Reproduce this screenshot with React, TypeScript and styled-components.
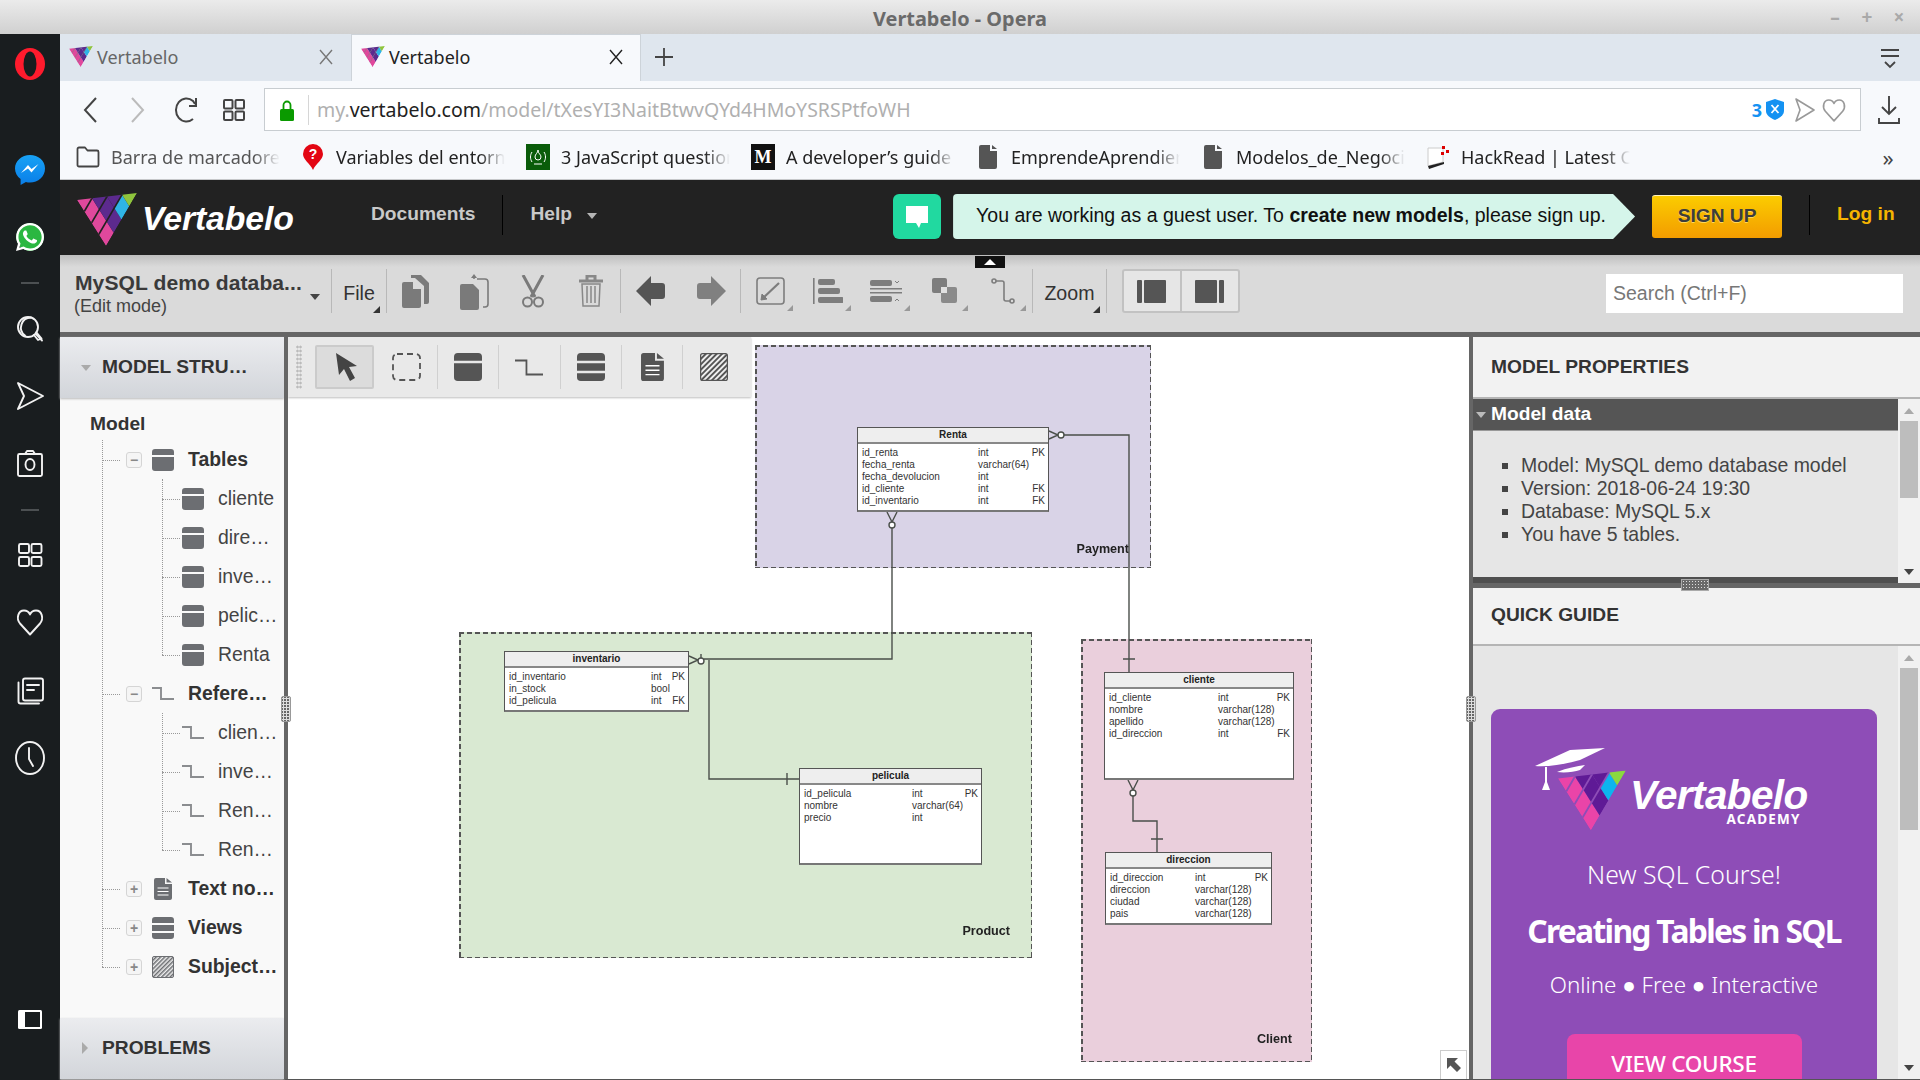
import React, { useId } from 'react';
import styled, { createGlobalStyle } from 'styled-components';
import { FaWhatsapp } from 'react-icons/fa';

const SANS = "'Liberation Sans', Arial, sans-serif";
const UI = "'Noto Sans', 'Open Sans', sans-serif";

const Global = createGlobalStyle`
  html, body { margin: 0; padding: 0; width: 1920px; height: 1080px; overflow: hidden; background: #fff; }
  #root { width: 1920px; height: 1080px; }
  * { box-sizing: border-box; }
`;

const Page = styled.div`
  width: 1920px; height: 1080px; display: flex; flex-direction: column; font-family: ${SANS}; overflow: hidden;
`;
const TitleBar = styled.div`
  height: 34px; flex: none; position: relative; display: flex; align-items: center; justify-content: center;
  background: linear-gradient(#ebebeb, #d0d0d0);
`;
const TitleText = styled.div`
  font: 700 19.9px ${UI}; color: #6a6a6a; padding-top: 2px;
`;
const WinControls = styled.div`
  position: absolute; right: 15px; top: 0; height: 34px; display: flex; align-items: center; gap: 20px;
  font: 700 19px ${UI}; color: #a9a9a9;
  & > span { width: 12px; text-align: center; }
`;
const Win = styled.div`
  flex: 1; min-height: 0; display: flex;
`;
const OperaBar = styled.div`
  width: 60px; flex: none; background: #191d1f; display: flex; flex-direction: column; align-items: center; padding-bottom: 43px;
`;
const Slot = styled.div<{ $gap?: number; $auto?: boolean }>`
  width: 34px; height: 34px; flex: none; display: flex; align-items: center; justify-content: center;
  margin-top: ${p => (p.$auto ? 'auto' : `${p.$gap ?? 0}px`)};
`;
const Dash = styled.div`
  width: 18px; height: 2px; background: #4c5052;
`;
const Browser = styled.div`
  flex: 1; min-width: 0; display: flex; flex-direction: column;
`;
const TabStrip = styled.div`
  height: 47px; flex: none; background: #dfe6ee; display: flex; align-items: stretch;
`;
const Tab = styled.div<{ $active?: boolean }>`
  width: 290px; flex: none; display: flex; align-items: center; padding: 0 16px 2px 9px; gap: 4px;
  font: 400 18px ${UI}; color: ${p => (p.$active ? '#222' : '#666')};
  background: ${p => (p.$active ? '#f7f9fc' : 'transparent')};
  ${p => (p.$active ? 'border: 1px solid #cdd3d9; border-bottom: 0; margin-left: 1px; width: 290px;' : '')}
`;
const TabClose = styled.div`
  margin-left: auto; display: flex;
`;
const NewTab = styled.div`
  width: 46px; display: flex; align-items: center; justify-content: center; margin-left: 0; padding-bottom: 2px;
`;
const TabMenu = styled.div`
  margin-left: auto; width: 60px; display: flex; align-items: center; justify-content: center;
`;
const AddressRow = styled.div`
  height: 50px; flex: none; background: #f7f9fc; display: flex; align-items: flex-start; padding-top: 7px;
`;
const NavCluster = styled.div`
  width: 204px; height: 43px; flex: none; display: flex; align-items: center;
`;
const NavBtn = styled.div`
  width: 48px; flex: none; display: flex; justify-content: center;
  &:first-child { margin-left: 6px; }
`;
const UrlBox = styled.div`
  width: 1597px; height: 43px; flex: none; background: #fff; border: 1px solid #c8cdd1; display: flex; align-items: center; padding-left: 14px;
`;
const UrlSep = styled.div`
  width: 1px; height: 30px; background: #d6d6d6; margin: 0 8px 0 13px;
`;
const UrlText = styled.div`
  font: 400 19.5px ${UI}; color: #b0b0b0; white-space: nowrap;
  & b { font-weight: 400; color: #222; }
`;
const UrlEnd = styled.div`
  margin-left: auto; display: flex; align-items: center; padding-right: 13px; gap: 5px;
  & > em { font: 700 18px ${UI}; color: #1492f2; font-style: normal; margin-right: -1px; }
  & > svg:first-of-type { margin-right: 5px; }
`;
const Download = styled.div`
  flex: 1; height: 43px; display: flex; align-items: center; justify-content: center; padding-right: 3px;
`;
const BookmarkBar = styled.div`
  height: 49px; flex: none; background: #f7f9fc; border-bottom: 1px solid #c6c8ca; display: flex; align-items: center; padding-left: 16px; padding-top: 4px;
`;
const Bookmark = styled.div`
  width: 225px; flex: none; display: flex; align-items: center; gap: 11px; font: 400 18px ${UI}; color: #222;
`;
const BookmarkIcon = styled.div`
  width: 24px; height: 26px; flex: none; display: flex; align-items: center; justify-content: center;
`;
const BookmarkText = styled.div<{ $muted?: boolean }>`
  width: 169px; overflow: hidden; white-space: nowrap; color: ${p => (p.$muted ? '#555' : '#222')};
  -webkit-mask-image: linear-gradient(90deg, #000 85%, transparent 100%);
  mask-image: linear-gradient(90deg, #000 85%, transparent 100%);
`;
const Chevrons = styled.div`
  margin-left: auto; width: 60px; padding-right: 4px; text-align: center; font: 400 22px ${UI}; color: #444;
`;
const AppHeader = styled.div`
  height: 75px; flex: none; background: #222; display: flex; align-items: flex-start; position: relative;
`;
const HeaderLogo = styled.div`
  margin: 13px 0 0 17px; width: 60px; flex: none; display: flex;
`;
const Wordmark = styled.div`
  font: italic 700 33.8px ${SANS}; color: #fff; margin: 19px 0 0 5px; width: 229px; flex: none; letter-spacing: -0.1px;
`;
const HeadLink = styled.div<{ $orange?: boolean }>`
  font: 700 19.2px ${SANS}; color: ${p => (p.$orange ? '#f5b300' : '#c9c9c9')}; margin-top: 23px; white-space: nowrap;
`;
const HeadSep = styled.div<{ $l: number; $r: number }>`
  width: 1px; height: 40px; background: #000; margin: 15px ${p => p.$r}px 0 ${p => p.$l}px; flex: none;
`;
const HeadCaret = styled.div`
  width: 0; height: 0; border: 5px solid transparent; border-top: 6px solid #b5b5b5; border-bottom: 0; margin: 33px 0 0 15px;
`;
const ChatBtn = styled.div`
  width: 48px; height: 45px; background: #21d9a0; border-radius: 6px; margin: 14px 0 0 296px; display: flex; align-items: center; justify-content: center; flex: none;
`;
const Notice = styled.div`
  width: 682px; height: 45px; margin: 14px 0 0 12px; flex: none; background: #d5f5ea; padding-left: 23px;
  clip-path: polygon(0 0, 660px 0, 100% 50%, 660px 100%, 0 100%);
  border-radius: 4px 0 0 4px; display: flex; align-items: center;
  font: 400 19.5px ${SANS}; color: #111; white-space: nowrap; padding-bottom: 2px;
  & b { font-weight: 700; white-space: pre; }
`;
const SignUp = styled.div`
  width: 130px; height: 43px; margin: 15px 0 0 17px; flex: none; border-radius: 3px; padding-bottom: 2px;
  background: linear-gradient(#fbcc00, #f39c00); border-top: 1px solid #fff3c0; display: flex; align-items: center; justify-content: center;
  font: 700 19.2px ${SANS}; color: #3d3d3d; text-shadow: 0 1px 0 #ffd75a;
`;
const Toolbar = styled.div`
  height: 82px; flex: none; background: linear-gradient(#bfbfbf, #dadada 12px); border-bottom: 5px solid #666; display: flex; align-items: flex-start; padding-top: 14px; position: relative;
`;
const CollapseTab = styled.div`
  position: absolute; left: 915px; top: 1px; width: 30px; height: 12px; background: #111; display: flex; align-items: center; justify-content: center;
  &::after { content: ''; border: 6px solid transparent; border-top: 0; border-bottom: 6px solid #fff; }
`;
const DocTitle = styled.div`
  width: 271px; height: 44px; flex: none; padding-left: 15px; position: relative; color: #333;
`;
const DocName = styled.div`
  font: 700 21.1px ${SANS}; line-height: 24px; margin-top: 2px; white-space: nowrap; color: #3a3a3a; letter-spacing: .05px;
`;
const DocMode = styled.div`
  font: 400 18px ${SANS}; line-height: 21px; margin: 1px 0 0 -1px; color: #444;
`;
const DocCaret = styled.div`
  position: absolute; left: 250px; top: 25px; border: 5.5px solid transparent; border-top: 6px solid #444; border-bottom: 0;
`;
const Sep = styled.div`
  width: 1px; height: 44px; background: #b8b8b8; flex: none;
`;
const TextCell = styled.div<{ $w: number }>`
  width: ${p => p.$w}px; height: 44px; flex: none; position: relative; font: 400 19.6px ${SANS}; color: #333; display: flex; align-items: center; justify-content: center;
  padding-top: 5px;
  &::after { content: ''; position: absolute; right: 6px; bottom: 0; border-style: solid; border-width: 0 0 7px 7px; border-color: transparent transparent #333 transparent; }
`;
const ToolCell = styled.div<{ $w: number; $menu?: boolean }>`
  width: ${p => p.$w}px; height: 44px; flex: none; display: flex; align-items: center; justify-content: center; position: relative;
  ${p => (p.$menu ? `&::after { content: ''; position: absolute; right: 6px; bottom: 2px; border-style: solid; border-width: 0 0 6px 6px; border-color: transparent transparent #999 transparent; }` : '')}
`;
const ViewToggle = styled.div`
  margin-left: 15px; width: 118px; height: 44px; flex: none; display: flex; background: #e6e6e6; border: 2px solid #c2c2c2; border-radius: 3px;
`;
const ViewBtn = styled.div`
  flex: 1; display: flex; align-items: center; justify-content: center;
  &:first-child { border-right: 2px solid #c2c2c2; }
`;
const Search = styled.div`
  margin: 5px 17px 0 auto; width: 297px; height: 39px; flex: none; background: #fff; padding-left: 7px; display: flex; align-items: center;
  font: 400 19.5px ${SANS}; color: #777;
`;
const Workspace = styled.div`
  flex: 1; min-height: 0; display: flex; position: relative; border-bottom: 1px solid #555;
`;
const LeftPanel = styled.div`
  width: 224px; flex: none; background: #f9f9f9; display: flex; flex-direction: column;
`;
const PanelHead = styled.div`
  height: 61px; flex: none; display: flex; align-items: center; padding: 0 0 2px 21px; gap: 11px;
  background: linear-gradient(#ebecef, #d2d5da); font: 700 19.2px ${SANS}; color: #333; white-space: nowrap;
  box-shadow: 0 1px 2px #bbb;
`;
const CaretDown = styled.div`
  width: 0; height: 0; border: 5.5px solid transparent; border-top: 6px solid #aaa; border-bottom: 0; margin-top: 2px;
`;
const CaretRight = styled.div`
  width: 0; height: 0; border: 6px solid transparent; border-left: 6px solid #aaa; border-right: 0; margin-left: 1px; margin-right: 3px;
`;
const Tree = styled.div`
  flex: 1; padding-top: 8px; display: flex; flex-direction: column;
`;
const TreeRoot = styled.div`
  height: 34px; padding: 2px 0 0 30px; font: 700 19.2px ${SANS}; color: #333; display: flex; align-items: center;
`;
const TreeGroup = styled.div<{ $left: number; $top: number }>`
  position: relative;
  &::before { content: ''; position: absolute; left: ${p => p.$left}px; top: ${p => p.$top}px; bottom: 19px; border-left: 1px dotted #999; }
`;
const TreeRow = styled.div<{ $level: 1 | 2 }>`
  height: 39px; display: flex; align-items: center; position: relative; white-space: nowrap;
  padding-left: ${p => (p.$level === 1 ? 66 : 122)}px;
  font: ${p => (p.$level === 1 ? 700 : 400)} 19.4px ${SANS}; color: ${p => (p.$level === 1 ? '#333' : '#444')};
  &::before { content: ''; position: absolute; left: ${p => (p.$level === 1 ? 42 : 102)}px; width: 18px; top: 50%; border-top: 1px dotted #999; }
`;
const Toggle = styled.div`
  width: 16px; height: 16px; flex: none; border: 1px solid #d5d5d5; background: #f5f5f5; border-radius: 3px; display: flex; align-items: center; justify-content: center;
  font: 700 14px ${SANS}; line-height: 14px; color: #888; margin-right: 10px;
`;
const TreeIcon = styled.div`
  width: 22px; height: 26px; flex: none; margin-right: 14px; display: flex; align-items: center; justify-content: center;
`;
const VDivider = styled.div`
  width: 4px; flex: none; background: #666; position: relative; z-index: 3;
`;
const SideGrip = styled.div`
  position: absolute; left: -3px; top: 359px; width: 10px; height: 26px; background: #666 radial-gradient(#ddd 1px, transparent 1.2px) 0 0 / 3px 3px; border: 1px solid #999; border-radius: 2px;
`;
const Canvas = styled.div`
  flex: 1; position: relative; background: #fff; overflow: hidden;
`;
const Palette = styled.div`
  position: absolute; left: 0; top: 0; width: 463px; height: 60px; background: #e9e9e9; box-shadow: 0 1px 2px #bdbdbd; display: flex; align-items: flex-start; padding: 8px 0 0 27px; z-index: 4;
  &::before { content: ''; position: absolute; left: 8px; top: 8px; width: 6px; height: 44px; background: radial-gradient(#bbb 1px, transparent 1.2px) 0 0 / 3px 4px; }
`;
const PaletteBtn = styled.div<{ $active?: boolean; $sep?: boolean }>`
  width: 61.4px; height: 44px; flex: none; display: flex; align-items: center; justify-content: center;
  ${p => (p.$active ? 'background: #dcdcdc; border: 2px solid #cbcbcb; border-radius: 2px; width: 59px; margin-right: 2.4px;' : '')}
  ${p => (p.$sep ? 'border-right: 1px solid #d0d0d0;' : '')}
`;
const Diagram = styled.div`
  position: absolute; inset: 0; filter: blur(0.3px);
`;
const Area = styled.div<{ $x: number; $y: number; $w: number; $h: number; $c: string }>`
  position: absolute; left: ${p => p.$x - 288}px; top: ${p => p.$y - 337}px; width: ${p => p.$w}px; height: ${p => p.$h}px;
  background:
    linear-gradient(90deg, #555 5px, transparent 5px) top left / 8px 1.5px repeat-x,
    linear-gradient(90deg, #555 5px, transparent 5px) bottom left / 8px 1.5px repeat-x,
    linear-gradient(#555 5px, transparent 5px) top left / 1.5px 8px repeat-y,
    linear-gradient(#555 5px, transparent 5px) top right / 1.5px 8px repeat-y,
    ${p => p.$c};
`;
const AreaLabel = styled.div<{ $r: number; $b: number }>`
  position: absolute; right: ${p => p.$r}px; bottom: ${p => p.$b}px; font: 700 12.6px ${SANS}; color: #222;
`;
const Lines = styled.svg`
  position: absolute; left: 0; top: 0; width: 1181px; height: 742px;
`;
const DbTable = styled.div<{ $x: number; $y: number; $w: number; $h: number }>`
  position: absolute; left: ${p => p.$x - 288}px; top: ${p => p.$y - 337}px; width: ${p => p.$w}px; height: ${p => p.$h}px;
  background: #fff; border: 1px solid #555; border-bottom: 2px solid #777; font: 400 10px ${SANS}; color: #333;
`;
const DbHead = styled.div`
  height: 16px; background: #eee; border-bottom: 2px solid #888; text-align: center; font: 700 10px/14px ${SANS}; color: #222;
`;
const DbRows = styled.div<{ $type: number }>`
  display: grid; grid-template-columns: ${p => p.$type}px minmax(0, 1fr) 18px; padding: 2.5px 3px 0 4px; grid-auto-rows: 12px; line-height: 12px;
  & > span { white-space: nowrap; }
  & > span:nth-child(3n) { text-align: right; }
`;
const NavCorner = styled.div`
  position: absolute; right: 2px; bottom: 0; width: 27px; height: 29px; background: #fff; border: 1px solid #ccc; border-bottom: 0; display: flex; align-items: center; justify-content: center; z-index: 3;
`;
const RightPanel = styled.div`
  width: 447px; flex: none; background: #f2f2f2; display: flex; flex-direction: column; position: relative;
`;
const RHead = styled.div<{ $h: number; $pb?: number }>`
  height: ${p => p.$h}px; flex: none; display: flex; align-items: center; padding: 0 0 ${p => p.$pb ?? 0}px 18px; font: 700 19.2px ${SANS}; color: #333; border-bottom: 2px solid #b5b5b5; background: #f2f2f2;
`;
const PropsBody = styled.div`
  height: 184px; flex: none; display: flex; border-bottom: 0;
`;
const PropsMain = styled.div`
  flex: 1; display: flex; flex-direction: column; background: #e6e6e6; border-bottom: 6px solid #4f4f4f;
`;
const SectionHead = styled.div`
  height: 32px; flex: none; background: #555; color: #fff; font: 700 19.2px ${SANS}; display: flex; align-items: center; padding: 0 0 2px 3px; gap: 5px; border-bottom: 1px solid #999;
`;
const SectionCaret = styled.div`
  width: 0; height: 0; border: 5px solid transparent; border-top: 6px solid #bbb; border-bottom: 0; margin-top: 3px;
`;
const Bullets = styled.ul`
  margin: 0; padding: 23px 0 0 48px; list-style: square; font: 400 19.45px/23px ${SANS}; color: #444;
`;
const Scroll = styled.div`
  width: 22px; flex: none; background: #f1f1f1; display: flex; flex-direction: column; align-items: center; position: relative; padding-top: 22px;
`;
const ScrollUp = styled.div`
  position: absolute; top: 9px; border: 5.5px solid transparent; border-bottom: 6px solid #aaa; border-top: 0;
`;
const ScrollDown = styled.div`
  position: absolute; bottom: 8px; border: 5.5px solid transparent; border-top: 6px solid #444; border-bottom: 0;
`;
const Thumb = styled.div<{ $h: number }>`
  width: 18px; height: ${p => p.$h}px; background: #bdbdbd;
`;
const HBand = styled.div`
  height: 5px; flex: none; background: #666; position: relative;
`;
const HGrip = styled.div`
  position: absolute; left: 208px; top: -4px; width: 28px; height: 12px; background: #6a6a6a radial-gradient(#ddd 0.8px, transparent 1px) 0 0 / 3px 3px; border: 1px solid #aaa;
`;
const GuideBody = styled.div`
  flex: 1; min-height: 0; display: flex;
`;
const GuideMain = styled.div`
  flex: 1; background: #e6e6e6; padding: 63px 0 0 18px; overflow: hidden;
`;
const Card = styled.div`
  width: 386px; height: 440px; background: #8e4db7; border-radius: 9px; display: flex; flex-direction: column; align-items: center; color: #fff; font-family: ${UI};
`;
const CardLogoRow = styled.div`
  align-self: flex-start; margin: 39px 0 0 44px; height: 75px; display: flex;
`;
const CardLogoText = styled.div`
  margin: 24px 0 0 4px; display: flex; flex-direction: column; align-items: flex-end;
`;
const CardWord = styled.div`
  font: italic 700 40.5px/46px ${SANS}; letter-spacing: -0.6px; color: #fff;
`;
const CardAcademy = styled.div`
  font: 700 13.5px/16px ${UI}; letter-spacing: 1.2px; margin-top: -7px; margin-right: 7px;
`;
const CardLine = styled.div<{ $top: number; $size: number; $weight: number }>`
  margin-top: ${p => p.$top}px; font-size: ${p => p.$size}px; font-weight: ${p => p.$weight}; line-height: 30px; white-space: nowrap;
`;
const CardTitle = styled.div`
  margin-top: 22px; font: 700 31.8px/40px ${UI}; white-space: nowrap; letter-spacing: -1.7px;
`;
const CardButton = styled.div`
  margin-top: 34px; width: 235px; height: 60px; background: #e845a9; border-radius: 8px; text-align: center; font: 500 22.5px/60px ${UI}; letter-spacing: -0.3px; white-space: nowrap;
`;

/* ---------- drawings ---------- */
type IP = { c?: string; s?: number };

function VMark({ w, line, palette }: { w: number; line: string; palette?: string[] }) {
  const id = useId();
  const [pk, pu, cy, gr] = palette ?? ['#e0489c', '#5c2a8e', '#2fb4e6', '#8fc53d'];
  const B = [29, 53], A = [-7.25, -11.5], D = [7.75, -13.25];
  const P = (a: number, b: number) => `${B[0] + a * A[0] + b * D[0]},${B[1] + a * A[1] + b * D[1]}`;
  const grid = [[pk, pu, cy, gr], [pk, pu, pu, cy], [pk, pu, cy, gr], [pk, pu, cy, gr]];
  return (
    <svg width={w} viewBox="0 0 60 53" fill="none">
      <clipPath id={id}><polygon points="0,7 29,53 60,0" /></clipPath>
      <g clipPath={`url(#${id})`}>
        {grid.map((row, a) => row.map((col, b) => (
          <polygon key={`${a}${b}`} fill={col} points={`${P(a, b)} ${P(a + 1, b)} ${P(a + 1, b + 1)} ${P(a, b + 1)}`} />
        )))}
        {[1, 2, 3].map(a => <line key={a} x1={B[0] + a * A[0]} y1={B[1] + a * A[1]} x2={B[0] + a * A[0] + 4 * D[0]} y2={B[1] + a * A[1] + 4 * D[1]} stroke={line} strokeWidth={w > 30 ? 1.6 : 1} />)}
      </g>
    </svg>
  );
}

const Opera = () => (
  <svg width="30" height="32" viewBox="0 0 30 32"><ellipse cx="15" cy="16" rx="15" ry="16" fill="#ff1b2d" /><ellipse cx="15" cy="16" rx="6.5" ry="12.5" fill="#191d1f" /></svg>
);
const Messenger = () => (
  <svg width="30" height="32" viewBox="0 0 30 32">
    <defs><linearGradient id="ms" x1="0" y1="0" x2="0" y2="1"><stop offset="0" stopColor="#18a2f5" /><stop offset="1" stopColor="#0a7ee8" /></linearGradient></defs>
    <path d="M15 1C6.7 1 0 7 0 14.5c0 4.3 2.2 8 5.6 10.5V31l5.3-3c1.3.4 2.7.5 4.1.5 8.3 0 15-6 15-14S23.3 1 15 1z" fill="url(#ms)" />
    <path d="M6 19l7-8 3.5 4L23.5 10l-7 8.5-3.5-4z" fill="#fff" />
  </svg>
);
const SIcon = ({ children, w = 30, h = 30, vb = '0 0 30 30' }: { children: React.ReactNode; w?: number; h?: number; vb?: string }) => (
  <svg width={w} height={h} viewBox={vb} fill="none" stroke="#f2f2f2" strokeWidth="1.9" strokeLinejoin="round" strokeLinecap="round">{children}</svg>
);
const SearchI = () => <SIcon><circle cx="13" cy="13" r="10" /><path d="M16 3.5a10 10 0 0 0-6 18M21 20l6 6.5" /><path d="M19 21l4 5 3.5-1.5-5-6" /></SIcon>;
const SendI = () => <SIcon><path d="M3 2l25 13L3 28l6-13z" /></SIcon>;
const CamI = () => <SIcon><rect x="3" y="6" width="24" height="22" rx="1.5" /><path d="M10 6l2-3h6l2 3" /><ellipse cx="15" cy="16.5" rx="4.5" ry="5.5" /></SIcon>;
const GridI = () => <SIcon><rect x="4" y="4" width="10" height="9" rx="1.5" /><rect x="16.5" y="4" width="10" height="9" rx="1.5" /><rect x="4" y="17" width="10" height="9" rx="1.5" /><rect x="16.5" y="17" width="10" height="9" rx="1.5" /></SIcon>;
const HeartI = ({ c = '#f2f2f2', s = 30 }: IP) => <svg width={s} height={s} viewBox="0 0 30 30" fill="none" stroke={c} strokeWidth="1.9" strokeLinejoin="round"><path d="M15 27.5L5 16.5C1 11.5 3 3.5 9 3.5c3 0 5 1.6 6 4 1-2.4 3-4 6-4 6 0 8 8 4 13z" /></svg>;
const NewsI = () => <SIcon><rect x="8" y="3.5" width="20" height="22" rx="2" /><path d="M3.5 7.5v19a2 2 0 0 0 2 2H24M12 10h12M12 15h7" /></SIcon>;
const ClockI = () => <SIcon h={36} vb="0 0 30 36"><ellipse cx="15" cy="18" rx="14" ry="16" /><path d="M14 8v11l4 7" /></SIcon>;
const PanelI = () => <svg width="26" height="26" viewBox="0 0 26 26"><rect x="1" y="3" width="24" height="19" rx="1.5" fill="#fff" /><rect x="8" y="5" width="15" height="15" fill="#191d1f" /></svg>;

const X = ({ c }: { c: string }) => <svg width="16" height="16" viewBox="0 0 16 16" stroke={c} strokeWidth="1.4"><path d="M2 1l12 14M14 1L2 15" /></svg>;
const Plus = () => <svg width="20" height="20" viewBox="0 0 20 20" stroke="#444" strokeWidth="1.8"><path d="M10 1v18M1 10h18" /></svg>;
const TabMenuI = () => <svg width="20" height="22" viewBox="0 0 20 22" fill="none" stroke="#444" strokeWidth="1.8"><path d="M1 3h18M1 9h18M5 15l5 5 5-5" /></svg>;
const Back = ({ c }: { c: string }) => <svg width="16" height="30" viewBox="0 0 16 30" fill="none" stroke={c} strokeWidth="2"><path d="M14 3L3 15l11 12" /></svg>;
const Fwd = ({ c }: { c: string }) => <svg width="16" height="30" viewBox="0 0 16 30" fill="none" stroke={c} strokeWidth="2"><path d="M2 3l11 12L2 27" /></svg>;
const Reload = () => <svg width="24" height="30" viewBox="0 0 24 30" fill="none" stroke="#444" strokeWidth="2"><path d="M19 24a10.5 11.5 0 1 1 0-18l2 3" /><path d="M22 3v8h-7" strokeLinejoin="miter" /></svg>;
const Grid2 = () => <svg width="24" height="24" viewBox="0 0 24 24" fill="none" stroke="#444" strokeWidth="2"><rect x="2" y="2" width="8.5" height="8.5" rx="1" /><rect x="13.5" y="2" width="8.5" height="8.5" rx="1" /><rect x="2" y="13.5" width="8.5" height="8.5" rx="1" /><rect x="13.5" y="13.5" width="8.5" height="8.5" rx="1" /></svg>;
const Lock = () => <svg width="16" height="22" viewBox="0 0 16 22"><path d="M4.5 10V6a3.5 3.5 0 0 1 7 0v4" fill="none" stroke="#0a9a00" strokeWidth="1.8" /><rect x="1" y="10" width="14" height="12" rx="1.5" fill="#0a9a00" /></svg>;
const Shield = () => <svg width="18" height="21" viewBox="0 0 18 21"><path d="M9 0l9 3v9c0 4-4 7-9 9-5-2-9-5-9-9V3z" fill="#1492f2" /><path d="M5.5 6l7 8M12.5 6l-7 8" stroke="#fff" strokeWidth="1.8" /></svg>;
const SendGrey = () => <svg width="22" height="26" viewBox="0 0 22 26" fill="none" stroke="#999" strokeWidth="1.6" strokeLinejoin="round"><path d="M2 2l18 11L2 24l4-11z" /></svg>;
const DownI = () => <svg width="22" height="30" viewBox="0 0 22 30" fill="none" stroke="#444" strokeWidth="1.9"><path d="M11 1v17M4 12l7 7 7-7M1 23v5h20v-5" /></svg>;
const FolderI = () => <svg width="24" height="22" viewBox="0 0 24 22" fill="none" stroke="#444" strokeWidth="1.8" strokeLinejoin="round"><path d="M1.5 3a1.5 1.5 0 0 1 1.5-1.5h6l2.5 3H21a1.5 1.5 0 0 1 1.5 1.5v13a1.5 1.5 0 0 1-1.5 1.5H3A1.5 1.5 0 0 1 1.5 19z" /></svg>;
const HelpPin = () => <svg width="20" height="26" viewBox="0 0 20 26"><path d="M10 0a10 10 0 0 1 10 10c0 6-7 9-10 16C7 19 0 16 0 10A10 10 0 0 1 10 0z" fill="#e30613" /><text x="10" y="15" textAnchor="middle" fontFamily={SANS} fontWeight="700" fontSize="14" fill="#fff">?</text></svg>;
const FccI = () => <svg width="24" height="26" viewBox="0 0 24 26"><rect width="24" height="26" fill="#0a5c0a" /><path d="M12 6c0 3-3 4-3 7a3 3 0 0 0 6 0c0-3-3-3-3-7z" fill="none" stroke="#fff" strokeWidth="1" /><path d="M6 8c-2 3-2 7 0 10M18 8c2 3 2 7 0 10M8 20h8" stroke="#fff" strokeWidth="1" fill="none" /></svg>;
const MediumBox = styled.div`
  width: 24px; height: 26px; background: #111; color: #fff; font: 700 18px/26px 'Liberation Serif', serif; text-align: center;
`;
const MediumI = () => <MediumBox>M</MediumBox>;
const DocI = () => <svg width="18" height="24" viewBox="0 0 18 24"><path d="M2 0h9v6h7v16a2 2 0 0 1-2 2H2a2 2 0 0 1-2-2V2a2 2 0 0 1 2-2zM13 0l5 4h-5z" fill="#555" /></svg>;
const HackI = () => <svg width="22" height="24" viewBox="0 0 22 24"><path d="M1 3h15v14L1 21z" fill="#fff" stroke="#ccc" /><path d="M1 21l16-4v2L2 24z" fill="#222" /><rect x="15" y="1" width="3" height="3" fill="#d00" /><rect x="19" y="5" width="3" height="3" fill="#d00" /><rect x="14" y="7" width="3" height="3" fill="#d00" /></svg>;
const Bubble = () => <svg width="24" height="26" viewBox="0 0 24 26"><path d="M1 2h22v17h-7l-2 5-3-5H1z" fill="#fff" /></svg>;

const G = '#7d7d7d';
const CopyI = () => <svg width="28" height="33" viewBox="0 0 28 33" fill="#7a7a7a"><path d="M9 0h10l8 8v19a2 2 0 0 1-2 2h-3V11L13 3H9z" /><path d="M2 7h9v7h8v17a2 2 0 0 1-2 2H2a2 2 0 0 1-2-2V9a2 2 0 0 1 2-2z" /></svg>;
const PasteI = () => <svg width="30" height="37" viewBox="0 0 30 37" fill="none"><path d="M14 5h2M18 6h8a3 3 0 0 1 3 3v22a3 3 0 0 1-3 3h-2" stroke="#7a7a7a" strokeWidth="1.6" /><path d="M12 5l3-4 3 4z" fill="#7a7a7a" /><path d="M3 11h11l6 6v18a2 2 0 0 1-2 2H3a2 2 0 0 1-2-2V13a2 2 0 0 1 2-2z" fill="#7a7a7a" /></svg>;
const CutI = () => <svg width="24" height="33" viewBox="0 0 24 33" fill="none" stroke="#7a7a7a"><path d="M2 0l12 22M22 0L10 22" strokeWidth="3" /><circle cx="6.5" cy="27" r="4.5" strokeWidth="2" /><circle cx="17.5" cy="27" r="4.5" strokeWidth="2" /></svg>;
const TrashI = () => <svg width="26" height="32" viewBox="0 0 26 32" fill="none" stroke="#888" strokeWidth="1.5"><path d="M1 6h24M9 5V1h8v4" strokeWidth="3" /><path d="M4 9l1 22h16l1-22zM9 11v17M13 11v17M17 11v17" /></svg>;
const ArrL = ({ c }: { c: string }) => <svg width="30" height="30" viewBox="0 0 30 30"><path d="M15 0L0 15l15 15v-7h11a3 3 0 0 0 3-3V10a3 3 0 0 0-3-3H15z" fill={c} /></svg>;
const ArrR = ({ c }: { c: string }) => <svg width="30" height="30" viewBox="0 0 30 30"><path d="M15 0l15 15-15 15v-7H4a3 3 0 0 1-3-3V10a3 3 0 0 1 3-3h11z" fill={c} /></svg>;
const LineEdit = () => <svg width="29" height="28" viewBox="0 0 29 28" fill="none" stroke={G}><rect x="1" y="1" width="27" height="26" rx="3" strokeWidth="1.6" /><path d="M6 22L23 6" strokeWidth="2.2" /><path d="M5 23l1-6 5 5z" fill={G} /></svg>;
const Align = () => <svg width="30" height="26" viewBox="0 0 30 26" fill={G}><rect x="0" y="0" width="1.6" height="26" /><rect x="5" y="1" width="17" height="6" rx="2" /><rect x="5" y="10" width="22" height="6" rx="2" /><rect x="5" y="19" width="26" height="6" rx="2" /></svg>;
const Distribute = () => <svg width="32" height="22" viewBox="0 0 32 22" fill={G}><rect x="0" y="0" width="22" height="6" rx="2" /><rect x="0" y="8" width="32" height="1.5" /><rect x="0" y="12" width="32" height="1.5" /><rect x="0" y="16" width="22" height="6" rx="2" /><path d="M25 1l2 2 2-2M25 21l2-2 2 2" fill="none" stroke={G} /></svg>;
const Overlap = () => <svg width="26" height="26" viewBox="0 0 26 26"><rect x="0" y="0" width="15" height="15" rx="2" fill={G} /><rect x="9" y="9" width="16" height="16" rx="2" fill="#8a8a8a" /><rect x="9" y="9" width="6" height="6" fill="#e0e0e0" /></svg>;
const Connector = () => <svg width="24" height="26" viewBox="0 0 24 26" fill="none" stroke={G} strokeWidth="1.6"><circle cx="3" cy="3" r="2" /><path d="M5 3h6a2 2 0 0 1 2 2v16a2 2 0 0 0 2 2h4" /><circle cx="21" cy="23" r="2" /></svg>;
const PanelGlyph = styled.svg<{ $flip?: boolean }>`
  transform: ${p => (p.$flip ? 'scaleX(-1)' : 'none')};
`;
const PanelL = ({ flip }: { flip?: boolean }) => <PanelGlyph $flip={flip} width="29" height="23" viewBox="0 0 29 23" fill="#555"><rect x="0" y="0" width="5" height="23" rx="1" /><rect x="7" y="0" width="22" height="23" rx="1" /></PanelGlyph>;

const TableI = ({ c = '#6c6e72', s = 22 }: IP) => <svg width={s} height={s} viewBox="0 0 22 22"><path d="M3 0h16a3 3 0 0 1 3 3v3H0V3a3 3 0 0 1 3-3zM0 8h22v11a3 3 0 0 1-3 3H3a3 3 0 0 1-3-3z" fill={c} /></svg>;
const ViewI = ({ c = '#6c6e72', s = 22 }: IP) => <svg width={s} height={s} viewBox="0 0 22 22"><path d="M3 0h16a3 3 0 0 1 3 3v3H0V3a3 3 0 0 1 3-3zM0 8h22v6H0zM0 16h22v3a3 3 0 0 1-3 3H3a3 3 0 0 1-3-3z" fill={c} /></svg>;
const RefI = ({ c = '#8b8d90', s = 22, t = 1.9 }: IP & { t?: number }) => <svg width={s} height={Math.round(s * 0.6)} viewBox="0 0 22 13" fill="none" stroke={c} strokeWidth={t}><path d="M0 1h9v11h13" /></svg>;
const NoteI = ({ c = '#6c6e72', h = 22 }: { c?: string; h?: number }) => <svg width={h * 0.82} height={h} viewBox="0 0 18 22"><path d="M2 0h9v6h7v14a2 2 0 0 1-2 2H2a2 2 0 0 1-2-2V2a2 2 0 0 1 2-2zM12.5 0L18 4.5h-5.5z" fill={c} /><path d="M3.5 10h11M3.5 13.5h11M3.5 17h11" stroke="#fff" strokeWidth="1.1" /></svg>;
const HatchI = ({ c = '#6c6e72', s = 22 }: IP) => {
  const id = useId();
  return <svg width={s} height={s} viewBox="0 0 22 22"><defs><pattern id={id} width="3" height="3" patternUnits="userSpaceOnUse" patternTransform="rotate(45)"><rect width="3" height="3" fill="#eee" /><rect width="1.5" height="3" fill={c} /></pattern></defs><rect x=".5" y=".5" width="21" height="21" rx="1.5" fill={`url(#${id})`} stroke={c} /></svg>;
};
const Arrow = () => <svg width="24" height="30" viewBox="0 0 24 30"><path d="M3 1l3 22 5-6 6 12 5-3-6-11 8-1z" fill="#444" /></svg>;
const DashedI = () => <svg width="29" height="28" viewBox="0 0 29 28" fill="none" stroke="#555" strokeWidth="1.8"><rect x="1" y="1" width="27" height="26" rx="4" strokeDasharray="6 4" /></svg>;
const CornerArrow = () => <svg width="16" height="16" viewBox="0 0 16 16"><path d="M1 1h11L8.5 4.5 15 11l-4 4-6.5-6.5L1 12z" fill="#555" /></svg>;

const CardMarkSvg = styled.svg`
  overflow: visible; flex: none;
`;
const CardMark = () => (
  <CardMarkSvg width="91" height="75" viewBox="0 0 91 75">
    <g transform="translate(23,15)"><VMark w={68} line="#8e4db7" palette={['#ea44a8', '#5f1a96', '#0cb5ee', '#8ad93f']} /></g>
    <path d="M0 18L35 2 70 0 45 12C30 16 15 19 0 18z" fill="#fff" />
    <path d="M22 24c10-4 20-6 28-7l-5 5c-6 2-15 3-23 2z" fill="#fff" />
    <path d="M10 19h2v15l3 8H7l3-8z" fill="#fff" />
  </CardMarkSvg>
);

/* ---------- data ---------- */
const bookmarks: [React.ReactNode, string, boolean?][] = [
  [<FolderI />, 'Barra de marcadores', true],
  [<HelpPin />, 'Variables del entorno'],
  [<FccI />, '3 JavaScript questions'],
  [<MediumI />, 'A developer’s guide to'],
  [<DocI />, 'EmprendeAprendiendo'],
  [<DocI />, 'Modelos_de_Negocio'],
  [<HackI />, 'HackRead | Latest Cyber'],
];

const tables = [
  { name: 'Renta', x: 857, y: 427, w: 192, h: 85, type: 116, rows: [['id_renta', 'int', 'PK'], ['fecha_renta', 'varchar(64)', ''], ['fecha_devolucion', 'int', ''], ['id_cliente', 'int', 'FK'], ['id_inventario', 'int', 'FK']] },
  { name: 'inventario', x: 504, y: 651, w: 185, h: 61, type: 142, rows: [['id_inventario', 'int', 'PK'], ['in_stock', 'bool', ''], ['id_pelicula', 'int', 'FK']] },
  { name: 'pelicula', x: 799, y: 768, w: 183, h: 97, type: 108, rows: [['id_pelicula', 'int', 'PK'], ['nombre', 'varchar(64)', ''], ['precio', 'int', '']] },
  { name: 'cliente', x: 1104, y: 672, w: 190, h: 108, type: 109, rows: [['id_cliente', 'int', 'PK'], ['nombre', 'varchar(128)', ''], ['apellido', 'varchar(128)', ''], ['id_direccion', 'int', 'FK']] },
  { name: 'direccion', x: 1105, y: 852, w: 167, h: 73, type: 85, rows: [['id_direccion', 'int', 'PK'], ['direccion', 'varchar(128)', ''], ['ciudad', 'varchar(128)', ''], ['pais', 'varchar(128)', '']] },
];

const Connections = () => (
  <Lines viewBox="288 337 1181 742" fill="none" stroke="#4a4f4a" strokeWidth="1.4">
    <path d="M1064 435H1129V672M1123 659h12" />
    <path d="M1049 431l9 4-9 4" />
    <circle cx="1061" cy="435" r="3" fill="#fff" />
    <path d="M892 528V659H704M709 660V779H799M787 773v12" />
    <path d="M887 512l5 10 5-10" />
    <circle cx="892" cy="525" r="3" fill="#fff" />
    <path d="M689 656l9 4-9 4M701 654v4" />
    <circle cx="701" cy="661" r="3" fill="#fff" />
    <path d="M1133 796V821H1157V852M1151 839h12" />
    <path d="M1128 780l5 10 5-10" />
    <circle cx="1133" cy="793" r="3" fill="#fff" />
  </Lines>
);

const Row1 = ({ open, icon, label }: { open: boolean; icon: React.ReactNode; label: string }) => (
  <TreeRow $level={1}>
    <Toggle>{open ? '−' : '+'}</Toggle>
    <TreeIcon>{icon}</TreeIcon>
    {label}
  </TreeRow>
);
const Row2 = ({ icon, label }: { icon: React.ReactNode; label: string }) => (
  <TreeRow $level={2}>
    <TreeIcon>{icon}</TreeIcon>
    {label}
  </TreeRow>
);

const WhatsBadge = styled.div`
  width: 32px; height: 32px; display: flex; background: radial-gradient(circle, #2bb741 60%, transparent 62%);
`;

export default function App() {
  return (
    <Page>
      <Global />
      <TitleBar>
        <TitleText>Vertabelo - Opera</TitleText>
        <WinControls><span>–</span><span>+</span><span>×</span></WinControls>
      </TitleBar>
      <Win>
        <OperaBar>
          <Slot $gap={13}><Opera /></Slot>
          <Slot $gap={72}><Messenger /></Slot>
          <Slot $gap={33}><WhatsBadge><FaWhatsapp size={32} color="#fff" /></WhatsBadge></Slot>
          <Slot $gap={12}><Dash /></Slot>
          <Slot $gap={12}><SearchI /></Slot>
          <Slot $gap={33}><SendI /></Slot>
          <Slot $gap={33}><CamI /></Slot>
          <Slot $gap={13}><Dash /></Slot>
          <Slot $gap={11}><GridI /></Slot>
          <Slot $gap={33}><HeartI /></Slot>
          <Slot $gap={34}><NewsI /></Slot>
          <Slot $gap={34}><ClockI /></Slot>
          <Slot $auto><PanelI /></Slot>
        </OperaBar>
        <Browser>
          <TabStrip>
            <Tab>
              <VMark w={24} line="#555" />
              Vertabelo
              <TabClose><X c="#777" /></TabClose>
            </Tab>
            <Tab $active>
              <VMark w={24} line="#555" />
              Vertabelo
              <TabClose><X c="#222" /></TabClose>
            </Tab>
            <NewTab><Plus /></NewTab>
            <TabMenu><TabMenuI /></TabMenu>
          </TabStrip>
          <AddressRow>
            <NavCluster>
              <NavBtn><Back c="#444" /></NavBtn>
              <NavBtn><Fwd c="#bbb" /></NavBtn>
              <NavBtn><Reload /></NavBtn>
              <NavBtn><Grid2 /></NavBtn>
            </NavCluster>
            <UrlBox>
              <Lock />
              <UrlSep />
              <UrlText>my.<b>vertabelo.com</b>/model/tXesYI3NaitBtwvQYd4HMoYSRSPtfoWH</UrlText>
              <UrlEnd>
                <em>3</em>
                <Shield />
                <SendGrey />
                <HeartI c="#999" s={26} />
              </UrlEnd>
            </UrlBox>
            <Download><DownI /></Download>
          </AddressRow>
          <BookmarkBar>
            {bookmarks.map(([icon, label, muted]) => (
              <Bookmark key={label}>
                <BookmarkIcon>{icon}</BookmarkIcon>
                <BookmarkText $muted={muted}>{label}</BookmarkText>
              </Bookmark>
            ))}
            <Chevrons>»</Chevrons>
          </BookmarkBar>
          <AppHeader>
            <HeaderLogo><VMark w={60} line="#222" /></HeaderLogo>
            <Wordmark>Vertabelo</Wordmark>
            <HeadLink>Documents</HeadLink>
            <HeadSep $l={27} $r={27} />
            <HeadLink>Help</HeadLink>
            <HeadCaret />
            <ChatBtn><Bubble /></ChatBtn>
            <Notice>You are working as a guest user. To&nbsp;<b>create new models</b>, please sign up.</Notice>
            <SignUp>SIGN UP</SignUp>
            <HeadSep $l={27} $r={27} />
            <HeadLink $orange>Log in</HeadLink>
          </AppHeader>
          <Toolbar>
            <CollapseTab />
            <DocTitle>
              <DocName>MySQL demo databa...</DocName>
              <DocMode>(Edit mode)</DocMode>
              <DocCaret />
            </DocTitle>
            <Sep />
            <TextCell $w={54}>File</TextCell>
            <Sep />
            <ToolCell $w={58.25}><CopyI /></ToolCell>
            <ToolCell $w={58.25}><PasteI /></ToolCell>
            <ToolCell $w={58.25}><CutI /></ToolCell>
            <ToolCell $w={58.25}><TrashI /></ToolCell>
            <Sep />
            <ToolCell $w={60}><ArrL c="#555" /></ToolCell>
            <ToolCell $w={59}><ArrR c="#808080" /></ToolCell>
            <Sep />
            <ToolCell $w={58.2} $menu><LineEdit /></ToolCell>
            <ToolCell $w={58.2} $menu><Align /></ToolCell>
            <ToolCell $w={58.2} $menu><Distribute /></ToolCell>
            <ToolCell $w={58.2} $menu><Overlap /></ToolCell>
            <ToolCell $w={58.2} $menu><Connector /></ToolCell>
            <Sep />
            <TextCell $w={73}>Zoom</TextCell>
            <Sep />
            <ViewToggle>
              <ViewBtn><PanelL /></ViewBtn>
              <ViewBtn><PanelL flip /></ViewBtn>
            </ViewToggle>
            <Search>Search (Ctrl+F)</Search>
          </Toolbar>
          <Workspace>
            <LeftPanel>
              <PanelHead><CaretDown />MODEL STRU…</PanelHead>
              <Tree>
                <TreeRoot>Model</TreeRoot>
                <TreeGroup $left={42} $top={0}>
                  <Row1 open icon={<TableI />} label="Tables" />
                  <TreeGroup $left={102} $top={0}>
                    <Row2 icon={<TableI />} label="cliente" />
                    <Row2 icon={<TableI />} label="dire…" />
                    <Row2 icon={<TableI />} label="inve…" />
                    <Row2 icon={<TableI />} label="pelic…" />
                    <Row2 icon={<TableI />} label="Renta" />
                  </TreeGroup>
                  <Row1 open icon={<RefI />} label="Refere…" />
                  <TreeGroup $left={102} $top={0}>
                    <Row2 icon={<RefI />} label="clien…" />
                    <Row2 icon={<RefI />} label="inve…" />
                    <Row2 icon={<RefI />} label="Ren…" />
                    <Row2 icon={<RefI />} label="Ren…" />
                  </TreeGroup>
                  <Row1 open={false} icon={<NoteI />} label="Text no…" />
                  <Row1 open={false} icon={<ViewI />} label="Views" />
                  <Row1 open={false} icon={<HatchI />} label="Subject…" />
                </TreeGroup>
              </Tree>
              <PanelHead><CaretRight />PROBLEMS</PanelHead>
            </LeftPanel>
            <VDivider><SideGrip /></VDivider>
            <Canvas>
              <Palette>
                <PaletteBtn $active><Arrow /></PaletteBtn>
                <PaletteBtn $sep><DashedI /></PaletteBtn>
                <PaletteBtn $sep><TableI c="#555" s={28} /></PaletteBtn>
                <PaletteBtn $sep><RefI c="#555" s={28} t={1.4} /></PaletteBtn>
                <PaletteBtn $sep><ViewI c="#555" s={28} /></PaletteBtn>
                <PaletteBtn $sep><NoteI c="#555" h={28} /></PaletteBtn>
                <PaletteBtn><HatchI c="#555" s={28} /></PaletteBtn>
              </Palette>
              <Diagram>
                <Area $x={755} $y={345} $w={396} $h={223} $c="#d9d3e7"><AreaLabel $r={22} $b={12}>Payment</AreaLabel></Area>
                <Area $x={459} $y={632} $w={573} $h={326} $c="#d9e9d2"><AreaLabel $r={22} $b={20}>Product</AreaLabel></Area>
                <Area $x={1081} $y={639} $w={231} $h={423} $c="#eacfdc"><AreaLabel $r={20} $b={16}>Client</AreaLabel></Area>
                <Connections />
                {tables.map(t => (
                  <DbTable key={t.name} $x={t.x} $y={t.y} $w={t.w} $h={t.h}>
                    <DbHead>{t.name}</DbHead>
                    <DbRows $type={t.type}>
                      {t.rows.flat().map((v, i) => <span key={i}>{v}</span>)}
                    </DbRows>
                  </DbTable>
                ))}
              </Diagram>
              <NavCorner><CornerArrow /></NavCorner>
            </Canvas>
            <VDivider><SideGrip /></VDivider>
            <RightPanel>
              <RHead $h={62}>MODEL PROPERTIES</RHead>
              <PropsBody>
                <PropsMain>
                  <SectionHead><SectionCaret />Model data</SectionHead>
                  <Bullets>
                    <li>Model: MySQL demo database model</li>
                    <li>Version: 2018-06-24 19:30</li>
                    <li>Database: MySQL 5.x</li>
                    <li>You have 5 tables.</li>
                  </Bullets>
                </PropsMain>
                <Scroll><ScrollUp /><Thumb $h={77} /><ScrollDown /></Scroll>
              </PropsBody>
              <HBand><HGrip /></HBand>
              <RHead $h={58} $pb={3}>QUICK GUIDE</RHead>
              <GuideBody>
                <GuideMain>
                  <Card>
                    <CardLogoRow>
                      <CardMark />
                      <CardLogoText>
                        <CardWord>Vertabelo</CardWord>
                        <CardAcademy>ACADEMY</CardAcademy>
                      </CardLogoText>
                    </CardLogoRow>
                    <CardLine $top={36} $size={24.8} $weight={300}>New SQL Course!</CardLine>
                    <CardTitle>Creating Tables in SQL</CardTitle>
                    <CardLine $top={19} $size={22.4} $weight={300}>Online ● Free ● Interactive</CardLine>
                    <CardButton>VIEW COURSE</CardButton>
                  </Card>
                </GuideMain>
                <Scroll><ScrollUp /><Thumb $h={162} /><ScrollDown /></Scroll>
              </GuideBody>
            </RightPanel>
          </Workspace>
        </Browser>
      </Win>
    </Page>
  );
}
